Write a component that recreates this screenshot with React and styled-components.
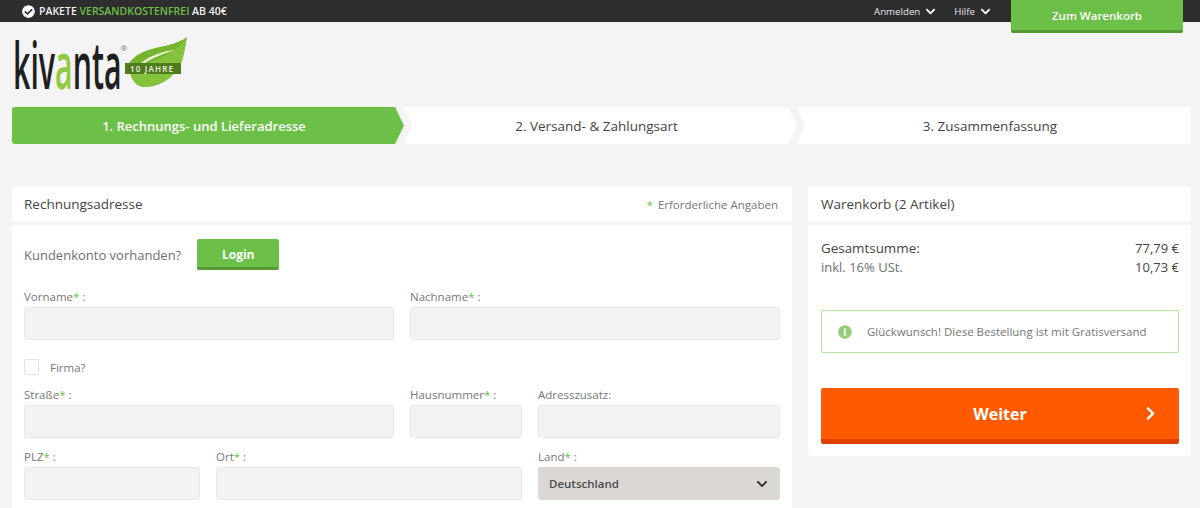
import React from "react";
import styled, { createGlobalStyle } from "styled-components";
import { FaCheckCircle, FaChevronDown, FaChevronRight, FaInfoCircle } from "react-icons/fa";

const GREEN = "#6cc048";
const GREEN_DARK = "#559a37";

const GlobalStyle = createGlobalStyle`
  html, body {
    margin: 0;
    height: 100%;
    overflow: hidden;
    background: #f4f4f4;
    font-family: "Open Sans", "Liberation Sans", sans-serif;
    color: #444;
  }
  * { box-sizing: border-box; }
`;

const TopBar = styled.div`
  height: 22px;
  background: #2e2e2e;
  display: flex;
  align-items: flex-start;
  padding: 0 17px 0 22px;
`;

const Promo = styled.div`
  display: flex;
  align-items: center;
  gap: 4px;
  height: 22px;
  color: #f2f2f2;
  font-size: 10.5px;
  font-weight: 600;
  svg { font-size: 13px; color: #fff; }
  em { font-style: normal; color: #6cc048; }
`;

const TopLinks = styled.div`
  margin-left: auto;
  display: flex;
  align-items: center;
  gap: 18px;
  height: 22px;
  margin-right: 20px;
`;

const TopLink = styled.span`
  display: flex;
  align-items: center;
  gap: 5px;
  color: #e6e6e6;
  font-size: 9.7px;
  font-weight: 500;
  svg { font-size: 11px; color: #fff; }
`;

const CartButton = styled.div`
  width: 172px;
  height: 33px;
  background: ${GREEN};
  border-bottom: 3px solid ${GREEN_DARK};
  border-radius: 0 0 2px 2px;
  color: #fff;
  font-size: 11.5px;
  font-weight: 600;
  display: flex;
  align-items: center;
  justify-content: center;
  position: relative;
  z-index: 1;
`;

const LogoRow = styled.div`
  display: flex;
  align-items: flex-start;
  height: 85px;
  padding-left: 12px;
  svg { margin-top: -4px; }
`;

const Steps = styled.div`
  margin: 0 9px 0 12px;
  display: flex;
  height: 37px;
`;

const Step = styled.div`
  flex: 0 0 ${(p) => p.$width}px;
  padding-right: 8px;
  display: flex;
  align-items: center;
  justify-content: center;
  font-size: ${(p) => (p.$active ? 13 : 13.5)}px;
  font-weight: ${(p) => (p.$active ? 600 : 500)};
  color: ${(p) => (p.$active ? "#fff" : "#444")};
  background: ${(p) => (p.$active ? GREEN : "#fff")};
  border-radius: ${(p) => (p.$active ? "3px 0 0 3px" : "0")};
  clip-path: ${(p) =>
    p.$first
      ? "polygon(0 0, calc(100% - 9px) 0, 100% 50%, calc(100% - 9px) 100%, 0 100%)"
      : p.$last
      ? "polygon(0 0, 100% 0, 100% 100%, 0 100%, 8px 50%)"
      : "polygon(0 0, calc(100% - 9px) 0, 100% 50%, calc(100% - 9px) 100%, 0 100%, 8px 50%)"};
`;

const Columns = styled.div`
  margin: 42px 9px 0 12px;
  display: grid;
  grid-template-columns: 780px 383px;
  gap: 16px;
  align-items: start;
`;

const PanelHead = styled.div`
  height: 36px;
  background: #fff;
  border-radius: 3px 3px 0 0;
  padding: 0 14px 0 ${(p) => p.$inset || 12}px;
  display: flex;
  align-items: center;
  justify-content: space-between;
  margin-bottom: 3px;
  font-size: 13.5px;
  font-weight: 500;
`;

const RequiredNote = styled.span`
  font-size: 11.5px;
  font-weight: 400;
  color: #777;
  i { font-style: normal; color: ${GREEN}; margin-right: 5px; }
`;

const PanelBody = styled.div`
  background: #fff;
  padding: 14px 12px 24px;
`;

const LoginRow = styled.div`
  display: flex;
  align-items: center;
  gap: 16px;
  font-size: 13px;
  color: #707070;
  margin-bottom: 20px;
`;

const LoginButton = styled.div`
  width: 82px;
  height: 31px;
  padding-top: 2px;
  background: ${GREEN};
  border-bottom: 3px solid ${GREEN_DARK};
  border-radius: 2px;
  color: #fff;
  font-size: 12px;
  font-weight: 700;
  display: flex;
  align-items: center;
  justify-content: center;
`;

const FormRow = styled.div`
  display: grid;
  grid-template-columns: ${(p) => p.$columns};
  gap: 16px;
  margin-bottom: ${(p) => p.$after || 0}px;
`;

const Field = styled.div`
  display: flex;
  flex-direction: column;
`;

const Label = styled.label`
  height: 17px;
  line-height: 14px;
  font-size: 11.5px;
  color: #777;
  i { font-style: normal; color: ${GREEN}; }
`;

const Input = styled.div`
  height: 33px;
  background: #f3f3f3;
  border: 1px solid #e9e9e9;
  border-radius: 3px;
`;

const Select = styled.div`
  height: 33px;
  background: #dbd8d3;
  border-radius: 3px;
  padding: 0 12px 0 11px;
  display: flex;
  align-items: center;
  justify-content: space-between;
  font-size: 11.5px;
  font-weight: 600;
  color: #4b4b4b;
  svg { font-size: 12px; color: #333; }
`;

const CheckRow = styled.div`
  display: flex;
  align-items: center;
  gap: 11px;
  font-size: 11.5px;
  color: #777;
  margin: 19px 0 13px;
`;

const CheckBox = styled.span`
  width: 15px;
  height: 16px;
  background: #fff;
  border: 1px solid #e4e4e4;
  border-radius: 2px;
`;

const CartBody = styled.div`
  background: #fff;
  border-radius: 0 0 3px 3px;
  padding: 14px 12px 12px 13px;
`;

const SumRow = styled.div`
  display: flex;
  justify-content: space-between;
  height: 19px;
  line-height: 19px;
  font-size: 13px;
  font-weight: ${(p) => (p.$strong ? 500 : 400)};
  color: ${(p) => (p.$strong ? "#444" : "#707070")};
  b { font-weight: 500; color: #444; }
  span:first-child { font-size: ${(p) => (p.$strong ? 13.4 : 13)}px; }
`;

const Notice = styled.div`
  margin-top: 33px;
  height: 43px;
  border: 1px solid #b5e3a0;
  border-radius: 2px;
  padding: 0 0 0 16px;
  display: flex;
  align-items: center;
  gap: 15px;
  font-size: 11.5px;
  color: #757575;
  svg { font-size: 14px; color: #93cf78; }
`;

const NextButton = styled.div`
  margin-top: 35px;
  height: 56px;
  background: #ff5a00;
  border-bottom: 5px solid #e04300;
  border-radius: 2px;
  color: #fff;
  font-size: 16px;
  font-weight: 700;
  display: flex;
  align-items: center;
  justify-content: center;
  position: relative;
  svg {
    position: absolute;
    right: 21px;
    top: 18px;
    font-size: 15px;
  }
`;

// Wordmark with the anniversary leaf next to it, drawn in page coordinates
const Logo = () => (
  <svg width="180" height="89" viewBox="12 18 180 89">
    <g transform="translate(13 89) scale(0.46 1)" fontFamily="Open Sans, sans-serif" fontSize="66" fontWeight="600" fill="#1f1f1f">
      <text>
        kiv<tspan fill="#8fca3f">a</tspan>nta
      </text>
    </g>
    <text x="120.5" y="51" fontFamily="Open Sans, sans-serif" fontSize="8" fill="#777">®</text>
    <path d="M187 37 C178 45 160 46 146 51 C136 55 130 60 127 68 L131 76 C133 82 137 86 143 87 C160 88 178 76 183 58 C185 50 186 44 187 37 Z" fill="#84c13c" />
    <path d="M187 37 C178 45 160 46 146 51 C136 55 130 60 127 68 L150 62 C165 57 178 50 187 37 Z" fill="#76b32e" />
    <path d="M141 63 C150 55 164 51 175 50 C163 54 152 58 145 63 Z" fill="#e4f3d0" />
    <rect x="125" y="63" width="56" height="11" fill="#4f7d1c" />
    <text x="130" y="71.5" fontFamily="Open Sans, sans-serif" fontSize="8" fontWeight="600" letterSpacing="1.2" fill="#eef5e2">
      10 JAHRE
    </text>
  </svg>
);

const Required = () => <i>*</i>;

export default function App() {
  return (
    <>
      <GlobalStyle />
      <TopBar>
        <Promo>
          <FaCheckCircle />
          <span>
            PAKETE <em>VERSANDKOSTENFREI</em> AB 40€
          </span>
        </Promo>
        <TopLinks>
          <TopLink>
            Anmelden <FaChevronDown />
          </TopLink>
          <TopLink>
            Hilfe <FaChevronDown />
          </TopLink>
        </TopLinks>
        <CartButton>Zum Warenkorb</CartButton>
      </TopBar>

      <LogoRow>
        <Logo />
      </LogoRow>

      <Steps>
        <Step $active $first $width={392}>1. Rechnungs- und Lieferadresse</Step>
        <Step $width={393}>2. Versand- &amp; Zahlungsart</Step>
        <Step $last $width={394}>3. Zusammenfassung</Step>
      </Steps>

      <Columns>
        <section>
          <PanelHead>
            Rechnungsadresse
            <RequiredNote>
              <i>*</i>Erforderliche Angaben
            </RequiredNote>
          </PanelHead>
          <PanelBody>
            <LoginRow>
              Kundenkonto vorhanden?
              <LoginButton>Login</LoginButton>
            </LoginRow>
            <FormRow $columns="1fr 1fr">
              <Field>
                <Label>Vorname<Required /> :</Label>
                <Input />
              </Field>
              <Field>
                <Label>Nachname<Required /> :</Label>
                <Input />
              </Field>
            </FormRow>
            <CheckRow>
              <CheckBox />
              Firma?
            </CheckRow>
            <FormRow $columns="370px 112px 242px" $after={12}>
              <Field>
                <Label>Straße<Required /> :</Label>
                <Input />
              </Field>
              <Field>
                <Label>Hausnummer<Required /> :</Label>
                <Input />
              </Field>
              <Field>
                <Label>Adresszusatz:</Label>
                <Input />
              </Field>
            </FormRow>
            <FormRow $columns="176px 306px 242px">
              <Field>
                <Label>PLZ<Required /> :</Label>
                <Input />
              </Field>
              <Field>
                <Label>Ort<Required /> :</Label>
                <Input />
              </Field>
              <Field>
                <Label>Land<Required /> :</Label>
                <Select>
                  Deutschland
                  <FaChevronDown />
                </Select>
              </Field>
            </FormRow>
          </PanelBody>
        </section>

        <aside>
          <PanelHead $inset={13}>Warenkorb (2 Artikel)</PanelHead>
          <CartBody>
            <SumRow $strong>
              <span>Gesamtsumme:</span>
              <span>77,79 €</span>
            </SumRow>
            <SumRow>
              <span>inkl. 16% USt.</span>
              <b>10,73 €</b>
            </SumRow>
            <Notice>
              <FaInfoCircle />
              Glückwunsch! Diese Bestellung ist mit Gratisversand
            </Notice>
            <NextButton>
              Weiter
              <FaChevronRight />
            </NextButton>
          </CartBody>
        </aside>
      </Columns>
    </>
  );
}
